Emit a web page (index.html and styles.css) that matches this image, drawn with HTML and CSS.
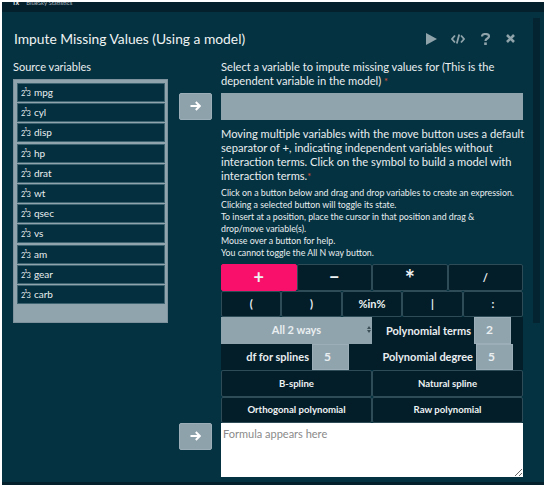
FILE: index.html
```html
<!DOCTYPE html>
<html>
<head>
    <title>Impute Missing Values</title>
    <link rel="stylesheet" href="styles.css">
</head>
<body>
    <div class="window">
        <div class="topbar"><span class="app-mark">fx</span><span class="app-name">BlueSky Statistics</span></div>
        <div class="scrollthumb"></div>
        <div class="head">
            <h1>Impute Missing Values (Using a model)</h1>
            <div class="tools">
                <svg class="play" width="11" height="12" viewBox="0 0 11 12"><path d="M0 0 L11 6 L0 12 Z" fill="#8fa3ab"/></svg>
                <svg width="14" height="10" viewBox="0 0 14 10"><path d="M4 1.500 L1 5 L4 8.500 M10 1.500 L13 5 L10 8.500 M8.200 0.500 L5.800 9.500" fill="none" stroke="#8fa3ab" stroke-width="1.800"/></svg>
                <svg width="9" height="12" viewBox="0 0 9 12"><path d="M1 3.500 C1 0.200 8 0.200 8 3.300 C8 5.700 4.500 5.300 4.500 8" fill="none" stroke="#8fa3ab" stroke-width="2.200"/><rect x="3.200" y="9.400" width="2.600" height="2.600" fill="#8fa3ab"/></svg>
                <svg width="9" height="9" viewBox="0 0 9 9"><path d="M1 1 L8 8 M8 1 L1 8" fill="none" stroke="#8fa3ab" stroke-width="2.600"/></svg>
            </div>
        </div>
        <div class="columns">
            <div class="left">
                <div class="left-title">Source variables</div>
                <ul class="varlist">
                    <li><span class="scale">2<sup>1</sup>3</span>mpg</li>
                    <li><span class="scale">2<sup>1</sup>3</span>cyl</li>
                    <li><span class="scale">2<sup>1</sup>3</span>disp</li>
                    <li><span class="scale">2<sup>1</sup>3</span>hp</li>
                    <li><span class="scale">2<sup>1</sup>3</span>drat</li>
                    <li><span class="scale">2<sup>1</sup>3</span>wt</li>
                    <li><span class="scale">2<sup>1</sup>3</span>qsec</li>
                    <li><span class="scale">2<sup>1</sup>3</span>vs</li>
                    <li><span class="scale">2<sup>1</sup>3</span>am</li>
                    <li><span class="scale">2<sup>1</sup>3</span>gear</li>
                    <li><span class="scale">2<sup>1</sup>3</span>carb</li>
                </ul>
            </div>
            <div class="middle">
                <button class="move"><svg width="11" height="10" viewBox="0 0 11 10"><path d="M0.500 5 H9.500 M5.800 1 L9.800 5 L5.800 9" fill="none" stroke="#fff" stroke-width="2"/></svg></button>
                <button class="move move-low"><svg width="11" height="10" viewBox="0 0 11 10"><path d="M0.500 5 H9.500 M5.800 1 L9.800 5 L5.800 9" fill="none" stroke="#fff" stroke-width="2"/></svg></button>
            </div>
            <div class="right">
                <div class="label">Select a variable to impute missing values for (This is the dependent variable in the model) <span class="req">*</span></div>
                <div class="target"></div>
                <div class="label para">Moving multiple variables with the move button uses a default<br>separator of +, indicating independent variables without<br>interaction terms. Click on the symbol to build a model with<br>interaction terms.<span class="req">*</span></div>
                <div class="help">Click on a button below and drag and drop variables to create an expression.<br>Clicking a selected button will toggle its state.<br>To insert at a position, place the cursor in that position and drag &amp;<br>drop/move variable(s).<br>Mouse over a button for help.<br>You cannot toggle the All N way button.</div>
                <div class="row four">
                    <button class="key plus">+</button><button class="key big">−</button><button class="key big star">*</button><button class="key">/</button>
                </div>
                <div class="row five">
                    <button class="key">(</button><button class="key">)</button><button class="key">%in%</button><button class="key">|</button><button class="key">:</button>
                </div>
                <div class="row two">
                    <div class="select">All 2 ways<span class="updown"></span></div>
                    <div class="field pad-terms"><span>Polynomial terms</span><span class="num">2</span></div>
                </div>
                <div class="row two">
                    <div class="field pad-df"><span>df for splines</span><span class="num">5</span></div>
                    <div class="field pad-degree"><span>Polynomial degree</span><span class="num">5</span></div>
                </div>
                <div class="row two"><button class="key small">B-spline</button><button class="key small">Natural spline</button></div>
                <div class="row two"><button class="key small">Orthogonal polynomial</button><button class="key small">Raw polynomial</button></div>
                <textarea class="formula" placeholder="Formula appears here"></textarea>
            </div>
        </div>
    </div>
</body>
</html>
```

FILE: styles.css
```css
html, body {
    margin: 0;
    height: 487px;
    overflow: hidden;
    background: #fff;
}

body {
    padding: 2px;
    box-sizing: border-box;
    font-family: Lato, sans-serif;
    color: #e9eef0;
}

.window {
    position: relative;
    height: 483px;
    box-sizing: border-box;
    background: #053240;
    border-bottom: 3px solid #03202c;
    overflow: hidden;
}

.topbar {
    height: 10px;
    background: #03202c;
    font-size: 7px;
    line-height: 0;
    padding-left: 11px;
    overflow: hidden;
}

.app-mark {
    margin-right: 7px;
    font-weight: 700;
}

.app-name {
    font-size: 6px;
    color: #a9b6bc;
}

.scrollthumb {
    position: absolute;
    top: 16px;
    left: 531px;
    width: 7px;
    height: 305px;
    background: #032430;
}

.head {
    display: flex;
    align-items: center;
    height: 39px;
    padding: 7px 0 0 12px;
}

h1 {
    margin: 0;
    font-size: 13.800px;
    font-weight: 400;
    color: #eef2f3;
}

.tools {
    margin-left: auto;
    margin-right: 29px;
    display: flex;
    align-items: center;
    gap: 16px;
}

.play {
    margin-right: -2px;
}

.columns {
    display: flex;
    padding-left: 11px;
}

.left {
    width: 155px;
}

.left-title {
    font-size: 11px;
    line-height: 14px;
    margin-top: 2px;
    margin-bottom: 5px;
}

.varlist {
    list-style: none;
    margin: 0;
    padding: 3px 2px 18px 3px;
    background: #90a4ae;
    border: 1px solid #7d929c;
    display: flex;
    flex-direction: column;
    gap: 1.200px;
}

.varlist li {
    height: 19px;
    box-sizing: border-box;
    background: #032f3e;
    border: 1px solid #3d6270;
    font-size: 10px;
    line-height: 17px;
    padding-left: 3px;
}

.scale {
    font-size: 7.500px;
    margin-right: 3px;
}

.scale sup {
    font-size: 5.500px;
    line-height: 0;
    vertical-align: 5px;
    margin: 0 -1px;
}

.middle {
    width: 53px;
    box-sizing: border-box;
    padding: 35px 0 0 11px;
}

.move {
    display: block;
    width: 33px;
    height: 27px;
    background: #8ea2ac;
    border: 1px solid #9cafb8;
    border-radius: 2px;
    padding: 0;
}

.move-low {
    margin-top: 303px;
}

.right {
    width: 302px;
}

.label {
    font-size: 11.150px;
    line-height: 14px;
    margin-top: 2px;
}

.req {
    color: #e0533a;
    font-size: 9px;
    line-height: 0;
}

.target {
    height: 27px;
    margin-top: 5px;
    background: #90a4ae;
}

.para {
    margin-top: 7px;
    white-space: nowrap;
}

.help {
    font-size: 8.800px;
    line-height: 12px;
    margin-top: 4px;
    margin-bottom: 5px;
}

.row {
    display: grid;
}

.four { grid-template-columns: repeat(4, 1fr); }
.five { grid-template-columns: repeat(5, 1fr); }
.two { grid-template-columns: 1fr 1fr; }

.row > * {
    height: 26.500px;
    box-sizing: border-box;
}

.key {
    background: #031d29;
    border: 1px solid #2d4c58;
    border-radius: 2px;
    color: #eef2f3;
    font-family: Lato, sans-serif;
    font-size: 11px;
    font-weight: 700;
    padding: 0;
}

.big {
    font-size: 18px;
    line-height: 1;
}

.star {
    font-size: 24px;
    padding-top: 2px;
}

.small {
    font-size: 9.600px;
}

.plus {
    background: #f8106a;
    border-color: #f8106a;
    font-size: 18px;
    line-height: 1;
}

.select {
    background: #90a4ae;
    position: relative;
    text-align: center;
    font-size: 11px;
    font-weight: 700;
    line-height: 25px;
}

.updown {
    position: absolute;
    right: 1px;
    top: 9px;
    width: 0;
    height: 0;
    border-left: 2px solid transparent;
    border-right: 2px solid transparent;
    border-bottom: 3px solid #3c4e56;
}

.updown::after {
    content: "";
    position: absolute;
    top: 4px;
    left: -2px;
    border-left: 2px solid transparent;
    border-right: 2px solid transparent;
    border-top: 3px solid #3c4e56;
}

.field {
    background: #031d29;
    display: flex;
    justify-content: flex-end;
    align-items: center;
    gap: 3px;
    font-size: 11px;
    font-weight: 700;
}

.pad-terms { padding-right: 12px; }
.pad-df { padding-right: 23px; }
.pad-degree { padding-right: 10px; }

.num {
    width: 37px;
    height: 100%;
    background: #90a4ae;
    border: 1px solid #9cafb8;
    box-sizing: border-box;
    text-align: center;
    font-size: 12px;
    line-height: 24px;
    padding-right: 6px;
}

.formula {
    display: block;
    width: 100%;
    height: 54px;
    box-sizing: border-box;
    margin: 0;
    padding: 4px 2px 1px;
    border: 0;
    border-radius: 0;
    background: #fff;
    font-family: Lato, sans-serif;
    font-size: 11px;
}

.formula::placeholder {
    color: #8a8a8a;
}
```
